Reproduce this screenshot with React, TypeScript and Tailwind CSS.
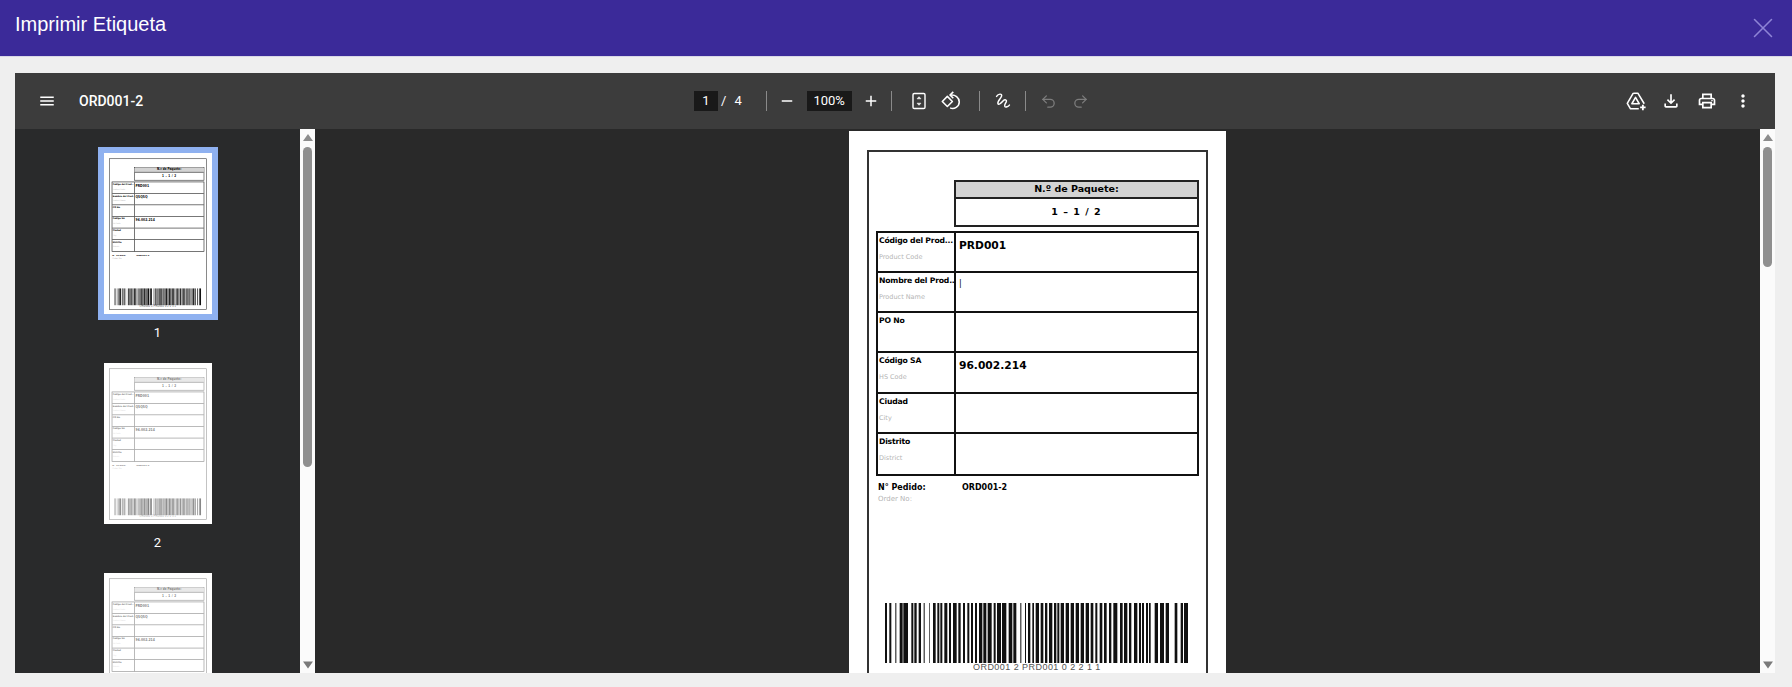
import { Undo2, Redo2, X } from "lucide-react";

const ROWS = [
  { label: "Código del Prod...", sub: "Product Code", value: "PRD001", thumbValue: "PRD001" },
  { label: "Nombre del Prod...", sub: "Product Name", value: "|", thumbValue: "Q5Q5Q", thin: true },
  { label: "PO No", sub: "", value: "" },
  { label: "Código SA", sub: "HS Code", value: "96.002.214", thumbValue: "96.002.214" },
  { label: "Ciudad", sub: "City", value: "" },
  { label: "Distrito", sub: "District", value: "" },
];

// bar edges read off the reference, in 1/3 px from x=880
const BARS = [
  [18, 24], [31, 37], [49, 52], [62, 71], [73, 87], [97, 103], [106, 113], [119, 126], [134, 137], [150, 152],
  [162, 170], [175, 181], [184, 190], [196, 205], [210, 216], [222, 233], [238, 245], [252, 258], [265, 271],
  [276, 282], [288, 294], [300, 310], [313, 322], [326, 338], [344, 350], [354, 366], [369, 382], [389, 400],
  [403, 412], [424, 427], [438, 441], [447, 454], [460, 465], [470, 480], [485, 493], [498, 505], [510, 520],
  [525, 532], [535, 541], [545, 555], [560, 570], [575, 585], [590, 600], [605, 615], [620, 630], [635, 643],
  [649, 655], [662, 670], [675, 683], [690, 697], [703, 715], [723, 731], [735, 745], [750, 757], [765, 775],
  [780, 786], [789, 795], [801, 807], [810, 815], [827, 837], [843, 855], [860, 870], [887, 895], [905, 912],
  [915, 927],
];

function Barcode() {
  return (
    <svg viewBox="18 0 909 183" preserveAspectRatio="none" className="h-[60px] w-[303px] shrink-0">
      {BARS.map(([a, b]) => (
        <rect key={a} x={a} y={0} width={b - a} height={183} fill="#111" />
      ))}
    </svg>
  );
}

function Sheet({ thumb = false }: { thumb?: boolean }) {
  return (
    <div className="h-[562px] w-[377px] shrink-0 bg-white pl-[18px] pt-[19px] font-['DejaVu_Sans',sans-serif] text-black">
      <div className="flex h-[528px] w-[341px] flex-col border-2 border-[#333] px-[7px] pt-[28px]">
        <div className="ml-[78px] flex h-[47px] w-[245px] shrink-0 flex-col border-2 border-[#222]">
          <div className="flex h-[17px] items-center justify-center border-b-2 border-[#222] bg-[#d3d3d3] text-[9.5px] font-bold">
            N.º de Paquete:
          </div>
          <div className="flex flex-1 items-center justify-center whitespace-pre text-[9.5px] font-bold tracking-[1px]">1 – 1 / 2</div>
        </div>

        <div className="mt-[3.5px] flex w-[323px] shrink-0 flex-col border-2 border-[#111]">
          {ROWS.map((r, i) => (
            <div key={r.label} className={`flex h-[40.3px] ${i < ROWS.length - 1 ? "border-b-2 border-[#111]" : ""}`}>
              <div className="w-[78px] shrink-0 overflow-hidden border-r-2 border-[#111] pl-[1px]">
                <div className="mt-[3px] whitespace-nowrap text-[7.7px] font-bold leading-[10px] tracking-[-0.2px]">{r.label}</div>
                <div className="mt-[7px] text-[6.5px] leading-[8px] text-[#b5b5b5]">{r.sub}</div>
              </div>
              {thumb ? (
                <div className="pl-[3px] pt-[5px] text-[10.7px] font-bold leading-[14px]">{r.thumbValue}</div>
              ) : r.thin ? (
                <div className="pl-[3px] pt-[4px] text-[8px] leading-[14px]">{r.value}</div>
              ) : (
                <div className="pl-[3px] pt-[6px] text-[10.7px] font-bold leading-[14px]">{r.value}</div>
              )}
            </div>
          ))}
        </div>

        <div className="mt-[7px] flex pl-[2px] text-[8px] font-bold leading-[10px]">
          <div className="w-[84px]">N° Pedido:</div>
          <div>ORD001-2</div>
        </div>
        <div className="mt-[1px] pl-[2px] text-[7px] leading-[10px] text-[#b5b5b5]">Order No:</div>

        <div className="ml-[9px] mt-[99px] flex">
          <Barcode />
        </div>
        <div className="ml-[97px] whitespace-pre font-['Liberation_Sans',sans-serif] text-[9px] leading-[8px] tracking-[0.45px] text-[#555]">
          ORD001 2 PRD001 0 2 2 1 1
        </div>
      </div>
    </div>
  );
}

function Thumb({ n, selected = false }: { n: number; selected?: boolean }) {
  return (
    <div className="flex shrink-0 flex-col items-center">
      <div className={`border-[6px] ${selected ? "border-[#8fb1f0]" : "border-transparent"}`}>
        <div className="h-[161px] w-[108px] overflow-hidden bg-white">
          <div className={`origin-top-left scale-[0.2865] ${selected ? "" : "opacity-50"}`}>
            <Sheet thumb />
          </div>
        </div>
      </div>
      <div className="mb-[16px] pt-[5px] text-center font-['Roboto',sans-serif] text-[13px] leading-4 text-white">{n}</div>
    </div>
  );
}

function Scrollbar({ thumb }: { thumb: string }) {
  return (
    <div className="flex w-[15px] shrink-0 flex-col items-center bg-[#fbfbfb] pb-[4px] pt-[5px]">
      <svg viewBox="0 0 10 7" className="h-[7px] w-[10px] shrink-0">
        <path d="M5 0 10 7H0z" fill="#8c8c8c" />
      </svg>
      <div className={`mt-[6px] w-[9px] rounded-full bg-[#8f8f8f] ${thumb}`} />
      <svg viewBox="0 0 10 7" className="mt-auto h-[8px] w-[10px] shrink-0">
        <path d="M5 7 10 0H0z" fill="#7a7a7a" />
      </svg>
    </div>
  );
}

function Sep() {
  return <div className="h-[20px] w-px shrink-0 bg-[#8a8a8a]" />;
}

function FitIcon() {
  return (
    <svg viewBox="0 0 24 24" className="h-[20px] w-[20px]" fill="none" stroke="#fff" strokeWidth="1.7">
      <rect x="4.800" y="3" width="14.400" height="18" rx="1.500" />
      <path d="M12 6.800l-2.400 2.600h4.800zM12 17.200l-2.400-2.600h4.800z" fill="#fff" strokeWidth="0.6" />
    </svg>
  );
}

function RotateIcon() {
  return (
    <svg viewBox="0 0 24 24" className="h-[22px] w-[22px]" fill="none" stroke="#fff" strokeWidth="1.7">
      <path d="M2.500 12.500 8 7l5.500 5.500L8 18z" strokeLinejoin="round" />
      <path d="M11.500 5.500c5-.6 9.500 2.500 9.500 7.500 0 5-5.500 8.500-10 6.500" />
      <path d="M14.500 2 11 5.500l3.500 3.500" />
    </svg>
  );
}

function AnnotateIcon() {
  return (
    <svg viewBox="0 0 24 24" className="h-[22px] w-[22px]" fill="none" stroke="#fff" strokeWidth="1.600" strokeLinecap="round">
      <path d="M5 7c2-3 6-3.500 5.500-.5-.5 3-5 5.500-4 8.500.6 1.800 3.500-.8 5.500-3 2-2.200 4.500-1.500 3.500 1-.8 2-2.500 3.500-1.500 5 1 1.200 3.500.2 5-1.500" />
    </svg>
  );
}

function DriveAddIcon() {
  return (
    <svg viewBox="0 0 24 24" className="-mr-[2px] h-[22px] w-[22px]" fill="none" stroke="#fff" strokeWidth="1.700" strokeLinejoin="round">
      <path d="M9 3.500h5l7 11.500M9 3.500 2.500 14.500 6 20.500h9" />
      <path d="M11.500 8 7.500 15h8z" />
      <path d="M19.500 16v6M16.500 19h6" strokeWidth="2" />
    </svg>
  );
}

function MaterialIcon({ d, size = 20, children }: { d: string; size?: number; children?: React.ReactNode }) {
  const cls = size === 20 ? "h-[20px] w-[20px]" : "h-[18px] w-[18px]";
  return (
    <svg viewBox="0 0 24 24" className={cls} fill="#fff">
      <path d={d} />
      {children}
    </svg>
  );
}

function Toolbar() {
  return (
    <div className="flex h-[56px] shrink-0 items-center bg-[#3c3c3c] font-['Roboto',sans-serif] text-white">
      <div className="flex w-[679px] shrink-0 items-center pl-[23px]">
        <MaterialIcon size={18} d="M3 18h18v-2H3v2zm0-5h18v-2H3v2zm0-7v2h18V6H3z" />
        <div className="ml-[23px] text-[14px] font-medium">ORD001-2</div>
      </div>

      <div className="flex items-center text-[13px]">
        <div className="flex h-[20px] w-[24px] items-center justify-center bg-[#191919]">1</div>
        <span className="ml-[3px]">/</span>
        <span className="ml-[8px]">4</span>
        <div className="ml-[24px]">
          <Sep />
        </div>
        <div className="ml-[11px]">
          <MaterialIcon size={18} d="M5 11h14v2H5z" />
        </div>
        <div className="ml-[11px] flex h-[20px] w-[45px] items-center justify-center bg-[#191919]">100%</div>
        <div className="ml-[10px]">
          <MaterialIcon size={18} d="M19 13h-6v6h-2v-6H5v-2h6V5h2v6h6z" />
        </div>
        <div className="ml-[11px]">
          <Sep />
        </div>
        <div className="ml-[17px]">
          <FitIcon />
        </div>
        <div className="ml-[11px]">
          <RotateIcon />
        </div>
        <div className="ml-[17px]">
          <Sep />
        </div>
        <div className="ml-[12px]">
          <AnnotateIcon />
        </div>
        <div className="ml-[11px]">
          <Sep />
        </div>
        <div className="ml-[14px]">
          <Undo2 size={17} color="#7d7d7d" strokeWidth={1.8} />
        </div>
        <div className="ml-[15px]">
          <Redo2 size={17} color="#7d7d7d" strokeWidth={1.8} />
        </div>
      </div>

      <div className="ml-auto flex items-center gap-[16px] pr-[22px]">
        <DriveAddIcon />
        <MaterialIcon d="M18 15v3H6v-3H4v3c0 1.100.9 2 2 2h12c1.100 0 2-.9 2-2v-3h-2zm-1-4l-1.410-1.410L13 12.170V4h-2v8.170L8.410 9.590 7 11l5 5 5-5z" />
        <MaterialIcon d="M19 8h-1V3H6v5H5c-1.660 0-3 1.340-3 3v6h4v4h12v-4h4v-6c0-1.660-1.340-3-3-3zM8 5h8v3H8V5zm8 12v2H8v-4h8v2zm2-2v-2H6v2H4v-4c0-.55.45-1 1-1h14c.55 0 1 .45 1 1v4h-2z">
          <circle cx="18" cy="11.500" r="1" />
        </MaterialIcon>
        <MaterialIcon d="M12 8c1.100 0 2-.9 2-2s-.9-2-2-2-2 .9-2 2 .9 2 2 2zm0 2c-1.100 0-2 .9-2 2s.9 2 2 2 2-.9 2-2-.9-2-2-2zm0 6c-1.100 0-2 .9-2 2s.9 2 2 2 2-.9 2-2-.9-2-2-2z" />
      </div>
    </div>
  );
}

export default function App() {
  return (
    <div className="flex h-[687px] w-full flex-col overflow-hidden bg-[#efefef]">
      <div className="flex h-[57px] shrink-0 items-start justify-between border-b border-[#d8d7e6] bg-[#3b2a99] pl-[15px] pr-[12px]">
        <div className="pt-[12px] font-['Liberation_Sans',sans-serif] text-[20px] leading-6 text-white">Imprimir Etiqueta</div>
        <X size={34} strokeWidth={1.1} color="#8e84d6" className="mt-[11px]" />
      </div>

      <div className="ml-[15px] mt-[16px] flex h-[600px] w-[1760px] flex-col">
        <Toolbar />
        <div className="flex min-h-0 flex-1 bg-[#292a2b]">
          <div className="flex w-[285px] shrink-0 flex-col items-center overflow-hidden pt-[18px]">
            <Thumb n={1} selected />
            <Thumb n={2} />
            <Thumb n={3} />
          </div>
          <Scrollbar thumb="h-[320px]" />
          <div className="flex min-w-0 flex-1 justify-center overflow-hidden bg-[#292929] pt-[2px]">
            <Sheet />
          </div>
          <Scrollbar thumb="h-[120px]" />
        </div>
      </div>
    </div>
  );
}
